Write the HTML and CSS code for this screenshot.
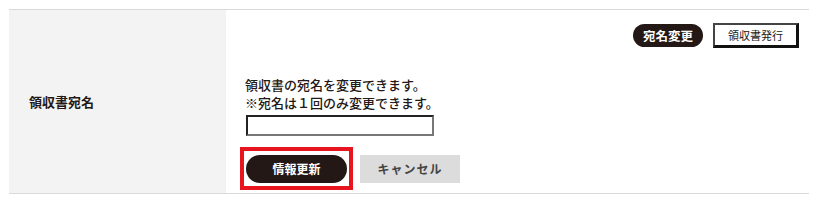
FILE: index.html
```html
<!DOCTYPE html>
<html lang="ja">
<head>
  <meta charset="UTF-8">
  <meta name="viewport" content="width=device-width, initial-scale=1.0">
  <title>領収書宛名</title>
  <link rel="stylesheet" href="styles.css">
</head>
<body>

<div class="row">
  <div class="label">領収書宛名</div>
  <div class="body">
    <div class="top-btns">
      <button class="pill small">宛名変更</button>
      <button class="outline">領収書発行</button>
    </div>

    <p class="note">領収書の宛名を変更できます。<br>※宛名は１回のみ変更できます。</p>
    <input class="name-input" type="text">

    <div class="actions">
      <span class="mark">
        <button class="pill big">情報更新</button>
      </span>
      <button class="cancel">キャンセル</button>
    </div>
  </div>
</div>

</body>
</html>
```

FILE: styles.css
```css
body {
  margin: 9px;
  font-family: "Noto Sans CJK JP", "Noto Sans", sans-serif;
  color: #231815;
  background: #fff;
}
.row {
  display: grid;
  grid-template-columns: 217px 1fr;
  border-top: 1px solid #d9d9d9;
  border-bottom: 1px solid #d9d9d9;
  height: 183px;
}
.label {
  background: #f3f3f3;
  display: flex;
  align-items: center;
  padding-left: 20px;
  font-size: 13px;
  font-weight: bold;
}
.body {
  padding: 13px 10px 0 19px;
}
.top-btns {
  display: flex;
  justify-content: flex-end;
  align-items: center;
  gap: 10px;
  height: 25px;
}
button {
  font-family: inherit;
  cursor: pointer;
  padding: 0;
}
.pill {
  background: #231815;
  color: #fff;
  border: none;
  border-radius: 20px;
  font-weight: bold;
}
.pill.small {
  width: 70px;
  height: 23px;
  font-size: 12.5px;
  line-height: 23px;
}
.outline {
  width: 86px;
  height: 25px;
  background: #fff;
  color: #231815;
  font-size: 11px;
  border: 2px solid #444;
  border-right: 3px solid #111;
  border-bottom: 3px solid #111;
}
.note {
  margin: 28px 0 0;
  font-size: 13px;
  font-weight: 500;
  line-height: 18px;
}
.name-input {
  display: block;
  margin: 3px 0 0 1px;
  width: 188px;
  height: 21px;
  box-sizing: border-box;
  border: 2px solid #222;
  border-right-color: #777;
  border-bottom-color: #777;
  padding: 0 4px;
}
.actions {
  display: flex;
  align-items: center;
  gap: 7px;
  margin-top: 11px;
}
.mark {
  display: inline-flex;
  margin-left: -5px;
  border: 4px solid #e8141e;
  padding: 4px 2px 3px 2px;
}
.pill.big {
  width: 101px;
  height: 28px;
  font-size: 12px;
  line-height: 28px;
}
.cancel {
  width: 100px;
  height: 28px;
  background: #dcdcdc;
  border: none;
  color: #444;
  font-size: 12px;
  font-weight: bold;
  letter-spacing: 1px;
}
```
